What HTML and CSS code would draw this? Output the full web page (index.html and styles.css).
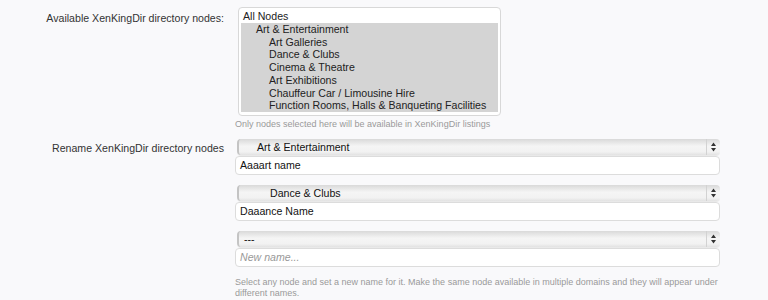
FILE: index.html
```html
<!DOCTYPE html>
<html lang="en">
<head>
    <meta charset="UTF-8">
    <title>XenKingDir options</title>
    <link rel="stylesheet" href="styles.css">
</head>
<body>
    <div class="options">
        <dl class="ctrl-unit">
            <dt>Available XenKingDir directory nodes:</dt>
            <dd>
                <div class="listbox">
                    <div class="opt">All Nodes</div>
                    <div class="opt sel lvl1">Art &amp; Entertainment</div>
                    <div class="opt sel lvl2">Art Galleries</div>
                    <div class="opt sel lvl2">Dance &amp; Clubs</div>
                    <div class="opt sel lvl2">Cinema &amp; Theatre</div>
                    <div class="opt sel lvl2">Art Exhibitions</div>
                    <div class="opt sel lvl2">Chauffeur Car / Limousine Hire</div>
                    <div class="opt sel lvl2 last">Function Rooms, Halls &amp; Banqueting Facilities</div>
                </div>
                <p class="explain">Only nodes selected here will be available in XenKingDir listings</p>
            </dd>
        </dl>
        <dl class="ctrl-unit">
            <dt>Rename XenKingDir directory nodes</dt>
            <dd>
                <div class="rename">
                    <div class="dropdown">
                        <span class="val lvl1">Art &amp; Entertainment</span>
                        <span class="arrows"><svg width="7" height="10" viewBox="0 0 7 10"><path d="M3.5 0.5 L6 4 H1 Z M1 6 H6 L3.5 9.5 Z" fill="#333"/></svg></span>
                    </div>
                    <div class="textbox">Aaaart name</div>
                </div>
                <div class="rename">
                    <div class="dropdown">
                        <span class="val lvl2">Dance &amp; Clubs</span>
                        <span class="arrows"><svg width="7" height="10" viewBox="0 0 7 10"><path d="M3.5 0.5 L6 4 H1 Z M1 6 H6 L3.5 9.5 Z" fill="#333"/></svg></span>
                    </div>
                    <div class="textbox">Daaance Name</div>
                </div>
                <div class="rename">
                    <div class="dropdown">
                        <span class="val">---</span>
                        <span class="arrows"><svg width="7" height="10" viewBox="0 0 7 10"><path d="M3.5 0.5 L6 4 H1 Z M1 6 H6 L3.5 9.5 Z" fill="#333"/></svg></span>
                    </div>
                    <div class="textbox placeholder">New name...</div>
                </div>
                <p class="explain bottom">Select any node and set a new name for it. Make the same node available in multiple domains and they will appear under different names.</p>
            </dd>
        </dl>
    </div>
</body>
</html>
```

FILE: styles.css
```css
body {
    margin: 0;
    background-color: #f9f9fb;
    font-family: "Liberation Sans", Arial, sans-serif;
    font-size: 10.6px;
    color: #222;
}
.options {
    padding-top: 7px;
}
.ctrl-unit {
    display: grid;
    grid-template-columns: 224px 485px;
    column-gap: 11px;
    margin: 0 0 7px 0;
}
.ctrl-unit dt {
    text-align: right;
    color: #333;
    padding-top: 5px;
}
.ctrl-unit dd {
    margin: 0;
}
.listbox {
    margin-left: 3px;
    width: 257px;
    border: 1px solid #d8d8d8;
    border-radius: 4px;
    background: #fff;
    padding: 2px 2px 3px 2px;
}
.opt {
    line-height: 12.75px;
    padding-left: 2px;
    white-space: nowrap;
}
.opt.sel {
    background: #d4d4d4;
}
.lvl1 {
    padding-left: 15px;
}
.lvl2 {
    padding-left: 28px;
}
.explain {
    margin: 3px 0 0 0;
    font-size: 9px;
    line-height: 11px;
    color: #9a9a9a;
}
.explain.bottom {
    margin-top: 3px;
}
.rename {
    margin-bottom: 10px;
}
.rename:first-child {
    margin-top: 2px;
}
.dropdown {
    display: flex;
    align-items: center;
    margin-left: 2px;
    width: 481px;
    height: 16px;
    border-radius: 4px;
    border-left: 2px solid #c4c4c4;
    background: linear-gradient(#d9d9d9, #f5f5f5 45%, #f2f2f2 80%, #e2e2e2);
    box-shadow: 0 1px 0 #e9e9e9;
}
.dropdown .val {
    flex: 1;
    padding-left: 5px;
    color: #111;
}
.dropdown .val.lvl1 {
    padding-left: 18px;
}
.dropdown .val.lvl2 {
    padding-left: 31px;
}
.arrows {
    width: 13px;
    height: 16px;
    border-left: 1px solid #d2d2d2;
    display: flex;
    justify-content: center;
    align-items: center;
}
.textbox {
    margin-top: 1px;
    height: 17px;
    line-height: 17px;
    border: 1px solid #dcdcdc;
    border-radius: 4px;
    background: #fff;
    padding-left: 4px;
    color: #111;
}
.textbox.placeholder {
    font-style: italic;
    color: #999;
}
```
